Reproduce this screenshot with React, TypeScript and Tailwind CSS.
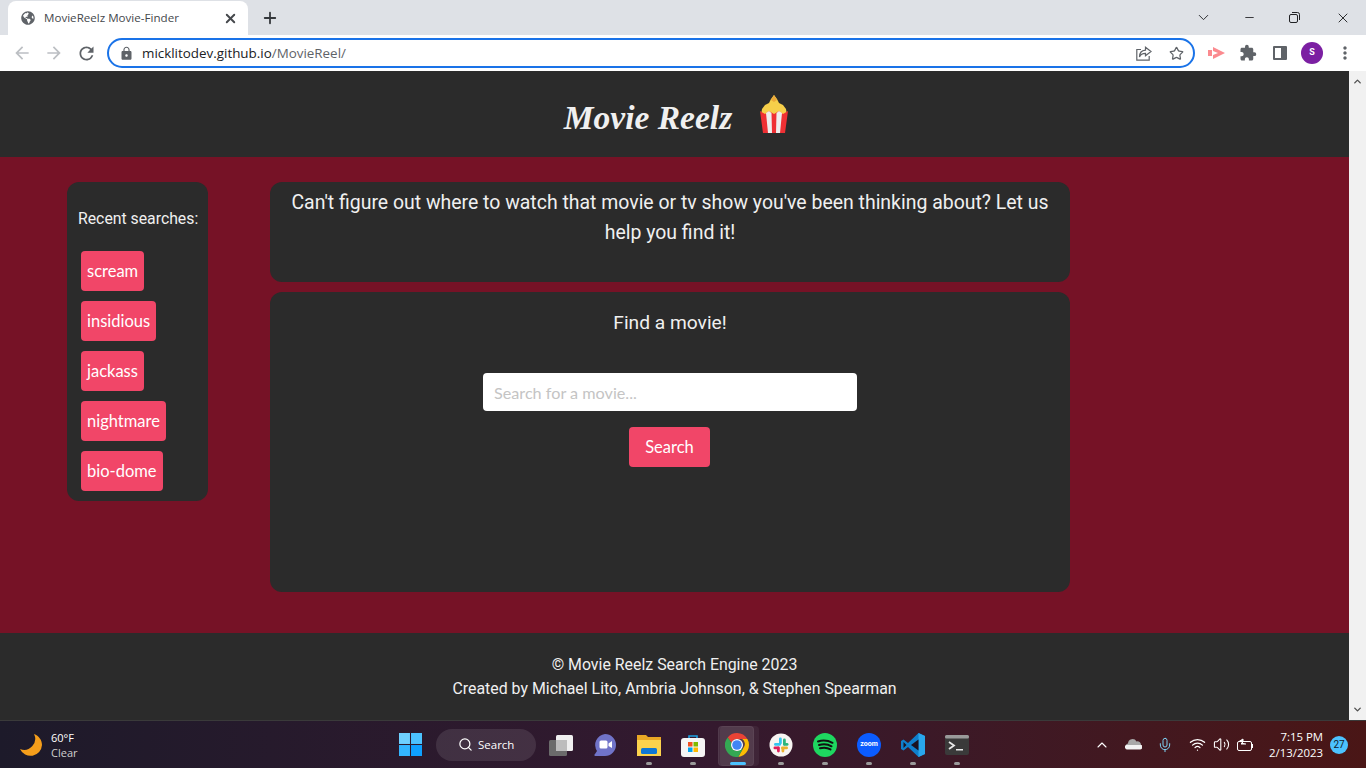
import { ChevronDown, ChevronUp, Minus, Plus, Search, Star, Volume2, Wifi, X, Mic } from "lucide-react";
import { FaGlobeAmericas } from "react-icons/fa";
import { MdArrowBack, MdArrowForward, MdExtension, MdLock, MdMoreVert, MdRefresh } from "react-icons/md";

const recent = ["scream", "insidious", "jackass", "nightmare", "bio-dome"];

function Popcorn() {
  return (
    <svg width="30" height="40" viewBox="0 0 30 40">
      <path d="M3 15 L6 11 L10 9 L12 5 L15 1 L18 5 L20 9 L24 11 L27 15 L28 21 H2 Z" fill="#f6cf4a" />
      <path d="M12 6 L15 1 L18 6 L15 8 Z" fill="#eba93a" />
      <path d="M1 17 L6 20 L10 17 L15 20 L20 17 L24 20 L29 17 L26 39 H4 Z" fill="#ef3034" />
      <path d="M7 19 L10 17 L12.500 19 L13 39 H9 Z M17.500 19 L20 17 L23 19 L21 39 H17 Z" fill="#eeeeee" />
    </svg>
  );
}

function ChromeLogo({ size = 24 }: { size?: number }) {
  return (
    <svg width={size} height={size} viewBox="4 4 40 40">
      <path d="M24 4a20 20 0 0 1 17.300 10H24a10 10 0 0 0-9.300 6.300L8.500 11.300A20 20 0 0 1 24 4z" fill="#ea4335" />
      <path d="M41.300 14A20 20 0 0 1 26 43.900L34.600 29A10 10 0 0 0 32.600 14z" fill="#fbbc04" />
      <path d="M8.500 11.300A20 20 0 0 0 26 43.900L34 30 24 34a10 10 0 0 1-9.300-13.700z" fill="#34a853" />
      <circle cx="24" cy="24" r="10" fill="#fff" />
      <circle cx="24" cy="24" r="8" fill="#4285f4" />
    </svg>
  );
}

function TaskIcon({ children, dot, active }: { children: React.ReactNode; dot?: boolean; active?: boolean }) {
  return (
    <div className="relative w-[44px] h-[48px] flex items-center justify-center">
      {active && <div className="absolute left-[5px] top-[5px] w-[39px] h-[40px] rounded-[4px] bg-white/5" />}
      {active && <div className="absolute left-[3px] top-[5px] w-[36px] h-[40px] rounded-[4px] bg-white/10 border border-white/5" />}
      <div className="relative flex">{children}</div>
      {dot && <div className="absolute bottom-[4px] left-[19px] w-[6px] h-[3px] rounded-full bg-[#9a9a9a]" />}
      {active && <div className="absolute bottom-[4px] left-[15px] w-[16px] h-[3px] rounded-full bg-[#4cc2ff]" />}
    </div>
  );
}

export default function App() {
  return (
    <div className="w-[1366px] h-[768px] overflow-hidden flex flex-col font-['Roboto',sans-serif]">
      {/* tab strip */}
      <div className="h-[35px] bg-[#dee1e6] flex items-end pl-[8px] shrink-0">
        <div className="w-[240px] h-[34px] bg-white rounded-t-[8px] flex items-center pl-[13px] pr-[10px]">
          <FaGlobeAmericas size={14} className="text-[#5f6368]" />
          <span className="ml-[9px] text-[11.6px] text-[#45484c] font-['Open_Sans',sans-serif]">MovieReelz Movie-Finder</span>
          <X size={15} strokeWidth={3} className="ml-auto text-[#45484c]" />
        </div>
        <Plus size={18} strokeWidth={2.4} className="ml-[13px] mb-[8px] text-[#35383c]" />
        <div className="ml-auto flex items-center h-[35px] text-[#202124]">
          <ChevronDown size={17} strokeWidth={1.3} className="mr-[31px]" />
          <Minus size={13} strokeWidth={1.6} className="mr-[33px]" />
          <svg width="11" height="11" viewBox="0 0 11 11" fill="none" stroke="currentColor" className="mr-[35px]"><rect x=".5" y="2.500" width="8" height="8" rx="1.500" /><path d="M3 .5h5.500a2 2 0 0 1 2 2V8" /></svg>
          <X size={16} strokeWidth={1.4} className="mr-[15px]" />
        </div>
      </div>

      {/* toolbar */}
      <div className="h-[36px] bg-white flex items-center shrink-0 pl-[12px]">
        <MdArrowBack size={20} className="text-[#bcbfc3]" />
        <MdArrowForward size={20} className="ml-[12px] text-[#bcbfc3]" />
        <MdRefresh size={21} className="ml-[12px] text-[#5f6368]" />
        <div className="ml-[10px] w-[1088px] h-[30px] rounded-full border-2 border-[#1a73e8] flex items-center pl-[10px] pr-[9px]">
          <MdLock size={15} className="text-[#5f6368]" />
          <span className="ml-[8px] text-[13.4px] text-[#202124] font-['Open_Sans',sans-serif]">micklitodev.github.io<span className="text-[#5f6368]">/MovieReel/</span></span>
          <svg width="16" height="15" viewBox="0 0 16 15" fill="none" stroke="#5f6368" strokeWidth="1.200" className="ml-auto mr-[1px]"><path d="M5 3.500H.8v10.700h12.400V10" /><path d="M9.500 1.200 15 5.500 9.500 9.800V7.300C6.500 7.300 4.500 8.300 3.500 11c0-4 2-6.500 6-6.800z" /></svg>
          <Star size={15} strokeWidth={2} className="ml-[16px] text-[#5f6368]" />
        </div>
        <svg width="18" height="14" viewBox="0 0 18 14" className="ml-[13px]" fill="#fb8a8f"><path d="M0 4h4v6H0zM5 1l12 6-12 6V9l5-2-5-2z" /></svg>
        <MdExtension size={18} className="ml-[13px] text-[#5f6368]" />
        <div className="ml-[16px] w-[14px] h-[14px] border-[2px] border-r-[6px] border-[#5f6368] rounded-[1px]" />
        <div className="ml-[14px] w-[22px] h-[22px] rounded-full bg-[#7b1fa2] text-white text-[9px] font-bold flex items-center justify-center">S</div>
        <MdMoreVert size={20} className="ml-[12px] text-[#5f6368]" />
      </div>

      {/* page */}
      <div className="h-[649px] flex shrink-0">
        <div className="w-[1349px] flex flex-col">
          <header className="h-[86px] bg-[#2b2b2b] flex items-center justify-center gap-[27px] pl-[4px] shrink-0">
            <h1 className="pt-[8px] text-[33.5px] leading-none font-bold italic text-[#f0f0f0] font-['Liberation_Serif',cursive]">Movie Reelz</h1>
            <Popcorn />
          </header>

          <main className="flex-1 bg-[#761226] flex items-start pt-[25px] pl-[67px]">
            <aside className="w-[141px] h-[319px] bg-[#2b2b2b] rounded-[12px] pt-[26px] pl-[11px]">
              <p className="text-[15.8px] leading-[22px] text-[#f0f0f0] whitespace-nowrap">Recent searches:</p>
              <div className="mt-[21px] ml-[3px] flex flex-col items-start gap-[10px]">
                {recent.map((r) => (
                  <button key={r} className="h-[40px] px-[6px] pt-[1px] rounded-[4px] bg-[#f14668] text-white text-[16.5px] font-['Lato',sans-serif]">{r}</button>
                ))}
              </div>
            </aside>
            <div className="ml-[62px] w-[800px] flex flex-col gap-[10px]">
              <section className="h-[100px] bg-[#2b2b2b] rounded-[12px] text-center text-[19.45px] leading-[30px] text-[#f0f0f0] px-[20px] pt-[6px]">
                Can't figure out where to watch that movie or tv show you've been thinking about? Let us help you find it!
              </section>
              <section className="h-[300px] bg-[#2b2b2b] rounded-[12px] flex flex-col items-center pt-[16px]">
                <p className="text-[19.2px] leading-[30px] text-[#f0f0f0]">Find a movie!</p>
                <input className="mt-[35px] w-[374px] h-[38px] bg-white rounded-[4px] px-[11px] text-[16.2px] font-['Lato',sans-serif] placeholder:text-[#c4c4c4]" placeholder="Search for a movie..." />
                <button className="mt-[16px] mr-[1px] w-[81px] h-[40px] pt-[1px] bg-[#f14668] rounded-[4px] text-white text-[16.5px] font-['Lato',sans-serif]">Search</button>
              </section>
            </div>
          </main>

          <footer className="h-[87px] bg-[#2b2b2b] shrink-0 pt-[20px] text-center text-[15.9px] leading-[24px] text-[#f0f0f0]">
            <p>© Movie Reelz Search Engine 2023</p>
            <p>Created by Michael Lito, Ambria Johnson, &amp; Stephen Spearman</p>
          </footer>
        </div>
        <div className="w-[17px] bg-[#f1f1f1] flex flex-col items-center justify-between py-[5px] text-[#505050]">
          <ChevronUp size={11} strokeWidth={3} />
          <ChevronDown size={11} strokeWidth={3} />
        </div>
      </div>

      {/* taskbar */}
      <div className="h-[48px] shrink-0 flex items-center border-t border-[#3a3a3a] bg-gradient-to-r from-[#1d1a2a] via-[#33192f] to-[#4a1616] text-white">
        <div className="w-[388px] flex items-center pl-[19px]">
          <svg width="24" height="24" viewBox="0 0 24 24"><path d="M15 1a11 11 0 0 1-14 15 11.500 11.500 0 0 0 22-4c0-5-3-9-8-11z" fill="#f59e1b" /></svg>
          <div className="ml-[8px] text-[11px] leading-[15px] font-['Open_Sans',sans-serif]">
            <div>60°F</div>
            <div className="text-[#cfcfcf]">Clear</div>
          </div>
        </div>
        <TaskIcon>
          <svg width="23" height="23" viewBox="0 0 22 22"><rect width="10.500" height="10.500" fill="#6fd0ff" /><rect x="11.500" width="10.500" height="10.500" fill="#4cc2ff" /><rect y="11.500" width="10.500" height="10.500" fill="#33b5ff" /><rect x="11.500" y="11.500" width="10.500" height="10.500" fill="#0ea0ff" /></svg>
        </TaskIcon>
        <div className="w-[100px] h-[32px] ml-[4px] rounded-full bg-white/10 flex items-center pl-[22px]">
          <Search size={15} strokeWidth={2} />
          <span className="ml-[5px] text-[11.5px] font-['Open_Sans',sans-serif]">Search</span>
        </div>
        <div className="ml-[3px] flex">
          <TaskIcon>
            <svg width="24" height="22" viewBox="0 0 24 22"><rect x="7" y="1" width="17" height="16" rx="1.500" fill="#f0f0f0" /><rect y="6" width="18" height="16" rx="1.500" fill="#6b6b6b" /><rect x="7" y="6" width="11" height="11" fill="#bdbdbd" /></svg>
          </TaskIcon>
          <TaskIcon>
            <svg width="24" height="24" viewBox="0 0 24 24"><path d="M12 1a11 11 0 1 1 0 22H3c-2 0-2-1-1-2l2-3A11 11 0 0 1 12 1z" fill="#7073c8" /><rect x="6.500" y="7.500" width="8" height="8" rx="1.500" fill="#fff" /><path d="M15.500 10.500 19 8v7l-3.500-2z" fill="#fff" /></svg>
          </TaskIcon>
          <TaskIcon dot>
            <svg width="24" height="22" viewBox="0 0 24 22"><path d="M0 1h9l2 2h13v19H0z" fill="#e9a825" /><rect y="6" width="24" height="16" fill="#fcd34d" /><rect x="4" y="14" width="16" height="6" rx="1.500" fill="#0f78d4" /></svg>
          </TaskIcon>
          <TaskIcon dot>
            <svg width="24" height="24" viewBox="0 0 24 24"><path d="M8 6V3h8v3" fill="none" stroke="#1ca1e2" strokeWidth="1.600" /><rect y="5" width="24" height="19" rx="3" fill="#f5f5f5" /><rect x="7" y="9" width="4.500" height="4.500" fill="#f25022" /><rect x="12.500" y="9" width="4.500" height="4.500" fill="#7fba00" /><rect x="7" y="14.500" width="4.500" height="4.500" fill="#00a4ef" /><rect x="12.500" y="14.500" width="4.500" height="4.500" fill="#ffb900" /></svg>
          </TaskIcon>
          <TaskIcon active>
            <ChromeLogo />
          </TaskIcon>
          <TaskIcon dot>
            <svg width="24" height="24" viewBox="0 0 24 24"><circle cx="12" cy="12" r="11.500" fill="#f7f5f2" /><rect x="10" y="4.500" width="2.800" height="7" rx="1.400" fill="#36c5f0" /><rect x="5" y="10" width="7" height="2.800" rx="1.400" fill="#36c5f0" /><rect x="14" y="5.500" width="2.800" height="7" rx="1.400" fill="#2eb67d" /><rect x="14" y="10" width="5.500" height="2.800" rx="1.400" fill="#2eb67d" /><rect x="12" y="13.500" width="7" height="2.800" rx="1.400" fill="#ecb22e" /><rect x="12.500" y="14" width="2.800" height="5.500" rx="1.400" fill="#ecb22e" /><rect x="8" y="13.500" width="2.800" height="6" rx="1.400" fill="#e01e5a" /><rect x="4.500" y="13.500" width="6" height="2.800" rx="1.400" fill="#e01e5a" /></svg>
          </TaskIcon>
          <TaskIcon dot>
            <svg width="24" height="24" viewBox="0 0 24 24"><circle cx="12" cy="12" r="12" fill="#1ed760" /><path d="M5 8.500c5-1.500 10-1 14.500 1.300M6 12c4.500-1.200 9-.8 12.500 1.300M7 15.300c3.500-.9 7.500-.6 10.500 1.100" fill="none" stroke="#111" strokeWidth="2" strokeLinecap="round" /></svg>
          </TaskIcon>
          <TaskIcon dot>
            <div className="w-[24px] h-[24px] rounded-full bg-[#0b5cff] flex items-center justify-center text-[7px] font-bold leading-none text-white">zoom</div>
          </TaskIcon>
          <TaskIcon dot>
            <svg width="24" height="24" viewBox="0 0 24 24"><path d="M17.500 0 24 3v18l-6.500 3L7 14l-4.500 3.500L0 16V8l2.500-1.500L7 10z" fill="#0f7fcc" /><path d="M17.500 0 24 3v18l-6.500 3z" fill="#29a7ec" /><path d="M17.500 6.500v11L10 12z" fill="#1b1320" /><path d="M2.500 9v6L5.500 12z" fill="#1b1320" /></svg>
          </TaskIcon>
          <TaskIcon dot>
            <svg width="24" height="20" viewBox="0 0 24 20"><rect width="24" height="20" rx="2" fill="#3a3a3a" /><rect width="24" height="3.500" rx="1.500" fill="#9a9a9a" /><path d="M4 7l5 3.500L4 14" fill="none" stroke="#e8e8e8" strokeWidth="1.800" /><rect x="11" y="14" width="7" height="1.500" fill="#e8e8e8" /></svg>
          </TaskIcon>
        </div>

        <div className="ml-auto flex items-center pr-[18px]">
          <ChevronUp size={16} strokeWidth={1.6} />
          <svg width="17" height="11" viewBox="0 0 17 11" className="ml-[15px]"><path d="M3 4.500a4.500 4.500 0 0 1 8.500-2A3.500 3.500 0 0 1 16 6H1c.3-.9 1-1.400 2-1.500z" fill="#a8a8a8" /><path d="M1 6h15.500a2.500 2.500 0 0 1-1.500 4.500H3A2.500 2.500 0 0 1 1 6z" fill="#f2f2f2" /></svg>
          <Mic size={16} strokeWidth={1.5} className="ml-[15px] text-[#7fd0f0]" />
          <Wifi size={17} strokeWidth={1.8} className="ml-[16px]" />
          <Volume2 size={17} strokeWidth={1.5} className="ml-[7px]" />
          <svg width="17" height="14" viewBox="0 0 17 14" fill="none" stroke="#fff" className="ml-[7px]"><rect x=".5" y="3.500" width="14" height="9" rx="1.500" /><path d="M15.500 6v4" /><path d="M2 3.500 6 1v3l-2 2h5" fill="#fff" /></svg>
          <div className="ml-[9px] w-[60px] text-[11.4px] leading-[16px] text-right font-['Open_Sans',sans-serif] whitespace-nowrap">
            <div>7:15 PM</div>
            <div>2/13/2023</div>
          </div>
          <div className="ml-[7px] w-[18px] h-[18px] rounded-full bg-[#4cc2ff] text-[#10202c] text-[10px] flex items-center justify-center">27</div>
        </div>
      </div>
    </div>
  );
}
